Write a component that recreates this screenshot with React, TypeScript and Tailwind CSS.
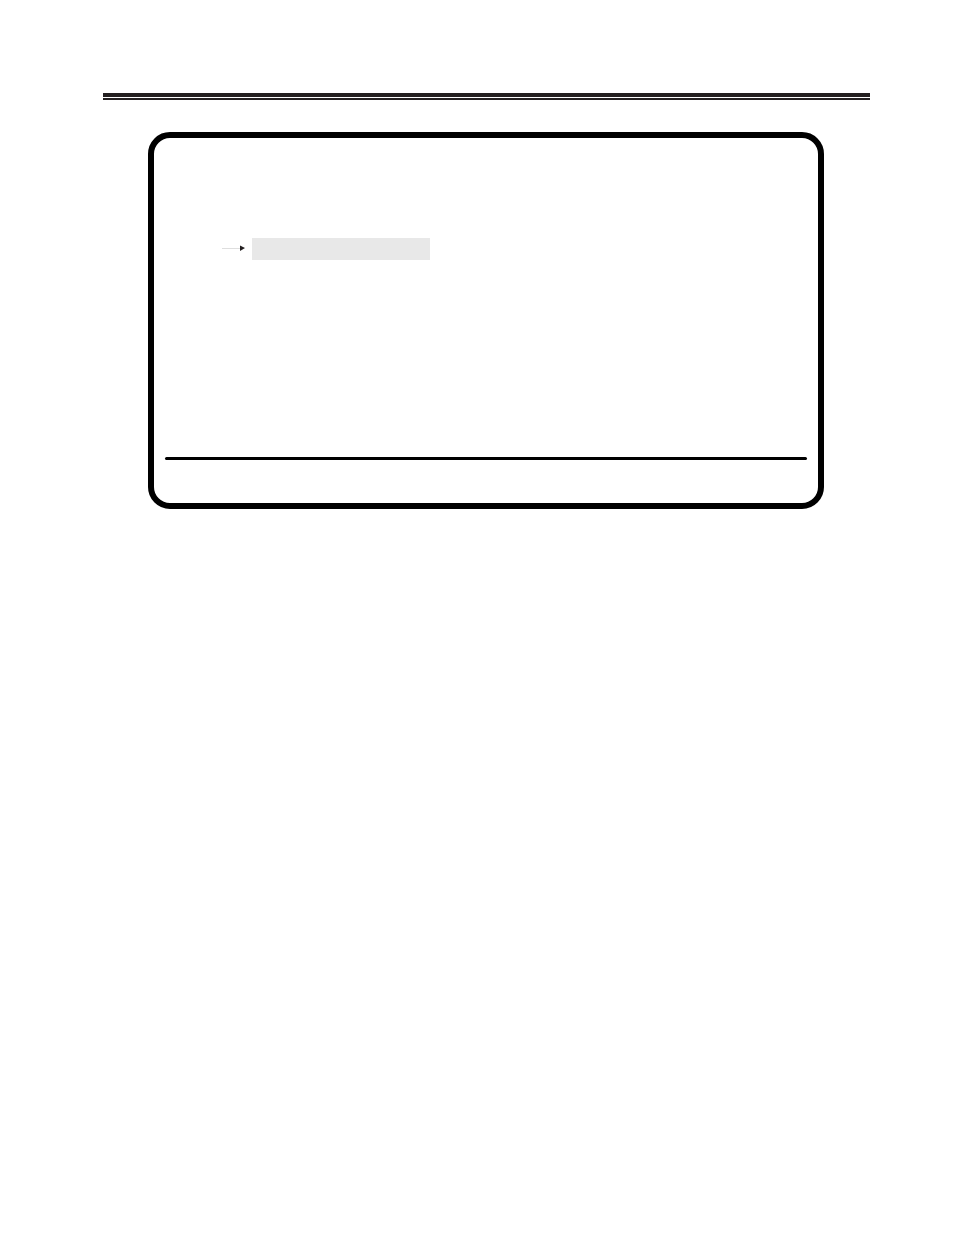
const PageRule = () => (
    <header className="pr-[84px] pl-[103px]">
        <div className="h-1 bg-[#231f20]" />
        <div className="mt-px h-0.5 bg-[#231f20]" />
    </header>
);

const Pointer = () => (
    <svg className="h-2 w-6 shrink-0" viewBox="0 0 24 8" fill="none" aria-hidden="true">
        <path d="M0 3.5H18" stroke="#dedede" strokeWidth="1" />
        <path d="M18 0.5L23 3L18 6Z" fill="#231f20" />
    </svg>
);

const ScreenFrame = () => (
    <section className="mt-8 mr-[130px] ml-[148px] rounded-[22px] border-[6px] border-black px-[11px] pt-[100px] pb-[43px]">
        <div className="flex items-center pl-[57px]">
            <Pointer />
            <div className="ml-1.5 h-[22px] w-[178px] bg-[#e8e8e8]" />
        </div>
        <div className="mt-[197px] h-[3px] rounded-full bg-black" />
    </section>
);

export default function App() {
    return (
        <main className="min-h-screen bg-white pt-[93px] font-['Liberation_Sans',sans-serif]">
            <PageRule />
            <ScreenFrame />
        </main>
    );
}
